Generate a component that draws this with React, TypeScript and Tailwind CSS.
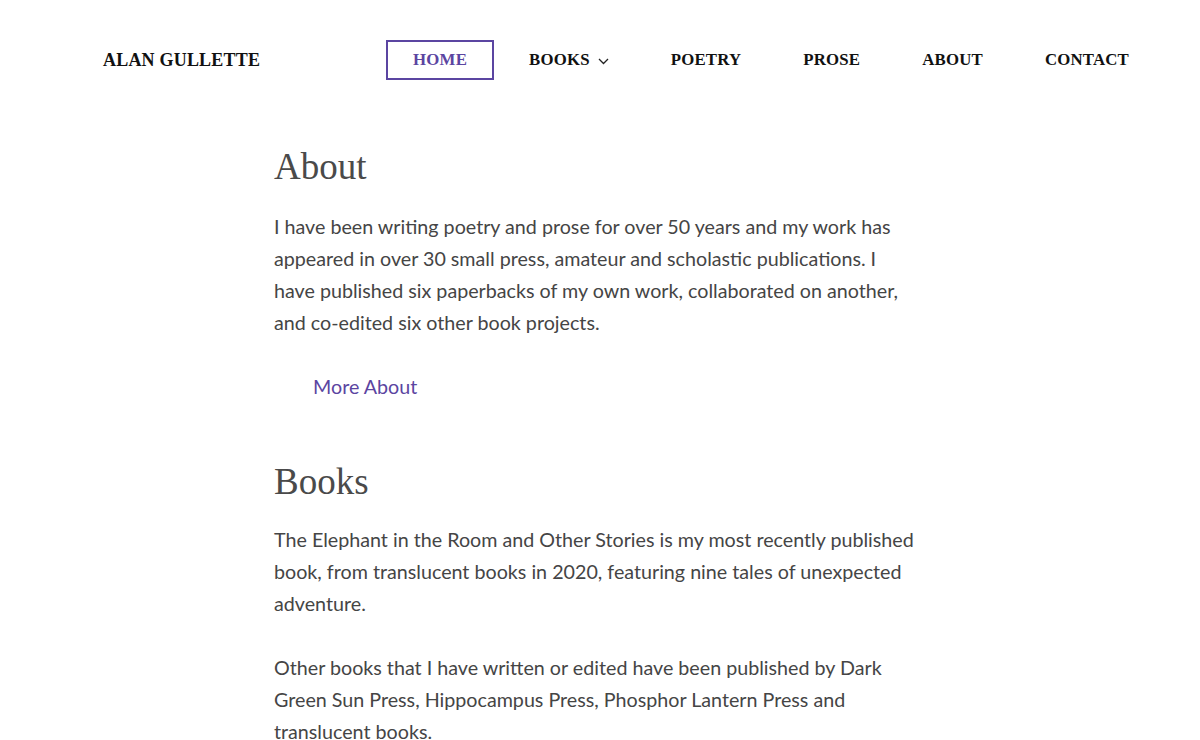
import React from 'react';

const navItems = [
  { label: 'HOME', active: true },
  { label: 'BOOKS', dropdown: true },
  { label: 'POETRY' },
  { label: 'PROSE' },
  { label: 'ABOUT' },
  { label: 'CONTACT' },
];

const Chevron = () => (
  <svg width="11" height="7" viewBox="0 0 11 7" fill="none" className="ml-[8px] mt-[2px]">
    <path d="M1 1l4.5 4.5L10 1" stroke="#222" strokeWidth="1.3" />
  </svg>
);

export default function App() {
  return (
    <div className="min-h-screen bg-white font-['Lato',sans-serif] text-[#454545]">
      <header className="flex items-center justify-between pl-[103px] pr-[44px] pt-[40px]">
        <a className="font-['Liberation_Serif',serif] font-bold text-[18px] text-[#111] tracking-[0.2px]">ALAN GULLETTE</a>
        <nav className="flex items-center gap-[8px]">
          {navItems.map(item => (
            <a
              key={item.label}
              className={
                'flex items-center h-[40px] px-[25px] font-[\'Liberation_Serif\',serif] font-bold text-[16.8px] tracking-[0.2px] border-2 ' +
                (item.active ? 'border-[#5b45a1] text-[#5b45a1]' : 'border-transparent text-[#111]')
              }
            >
              {item.label}
              {item.dropdown && <Chevron />}
            </a>
          ))}
        </nav>
      </header>

      <main className="pl-[274px] pt-[63px]">
        <section className="w-[648px]">
          <h2 className="font-['Liberation_Serif',serif] text-[37px] leading-[48px] text-[#4a4a4a]">About</h2>
          <p className="mt-[20px] text-[19.7px] leading-[32px]">
            I have been writing poetry and prose for over 50 years and my work has appeared in over 30 small press, amateur and scholastic publications. I have published six paperbacks of my own work, collaborated on another, and co-edited six other book projects.
          </p>
          <p className="mt-[32px] pl-[39px] text-[19.7px] leading-[32px]">
            <a className="text-[#5b45a1]">More About</a>
          </p>
        </section>

        <section className="w-[648px] mt-[55px]">
          <h2 className="font-['Liberation_Serif',serif] text-[37px] leading-[48px] text-[#4a4a4a]">Books</h2>
          <p className="mt-[18px] text-[19.7px] leading-[32px]">
            The Elephant in the Room and Other Stories is my most recently published book, from translucent books in 2020, featuring nine tales of unexpected adventure.
          </p>
          <p className="mt-[32px] text-[19.7px] leading-[32px]">
            Other books that I have written or edited have been published by Dark Green Sun Press, Hippocampus Press, Phosphor Lantern Press and translucent books.
          </p>
        </section>
      </main>
    </div>
  );
}
